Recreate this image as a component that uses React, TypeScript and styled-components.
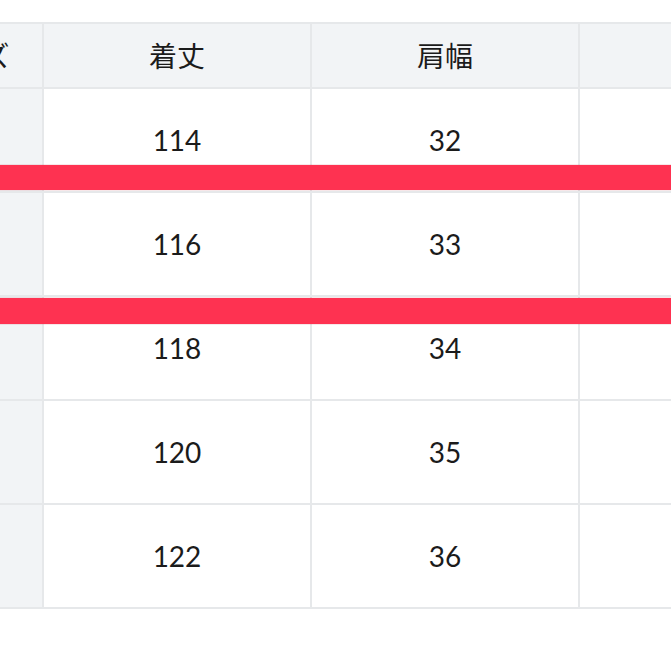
import React from 'react';
import styled, { createGlobalStyle } from 'styled-components';

const GlobalStyle = createGlobalStyle`
  html, body {
    margin: 0;
    padding: 0;
    background: #fff;
    overflow: hidden;
  }
  body {
    font-family: Lato, "Noto Sans CJK JP", sans-serif;
    color: #1b1b1b;
  }
`;

const Page = styled.div`
  position: relative;
  width: 671px;
  height: 671px;
  overflow: hidden;
  padding-top: 22px;
  box-sizing: border-box;
`;

const Table = styled.div`
  display: grid;
  grid-template-columns: 148px 266px 266px 266px 266px;
  grid-template-rows: 63px repeat(5, 102px);
  gap: 2px;
  padding: 2px;
  margin-left: -108px;
  width: max-content;
  background: #e6e8ea;
`;

const Cell = styled.div<{ $head?: boolean }>`
  display: flex;
  align-items: center;
  justify-content: center;
  background: ${(p) => (p.$head ? '#f2f4f6' : '#fff')};
  font-size: 28px;
  line-height: 1;
`;

const Bar = styled.div<{ $top: number; $h: number }>`
  position: absolute;
  left: 0;
  right: 0;
  top: ${(p) => p.$top}px;
  height: ${(p) => p.$h}px;
  background: #fe3251;
  box-shadow: 0 0 1px rgba(180, 20, 40, 0.6);
`;

const headers = ['サイズ', '着丈', '肩幅', '胸囲', '袖丈'];

const rows = [
  ['110', '114', '32', '72', '38'],
  ['120', '116', '33', '74', '40'],
  ['130', '118', '34', '76', '42'],
  ['140', '120', '35', '78', '44'],
  ['150', '122', '36', '80', '46'],
];

const App = () => {
  return (
    <Page>
      <GlobalStyle />
      <Table>
        {headers.map((h) => (
          <Cell key={h} $head>
            {h}
          </Cell>
        ))}
        {rows.map((r) =>
          r.map((v, i) => (
            <Cell key={r[0] + '-' + i} $head={i === 0}>
              {i === 0 ? '' : v}
            </Cell>
          ))
        )}
      </Table>
      <Bar $top={165} $h={25} />
      <Bar $top={298} $h={26} />
    </Page>
  );
};

export default App;
